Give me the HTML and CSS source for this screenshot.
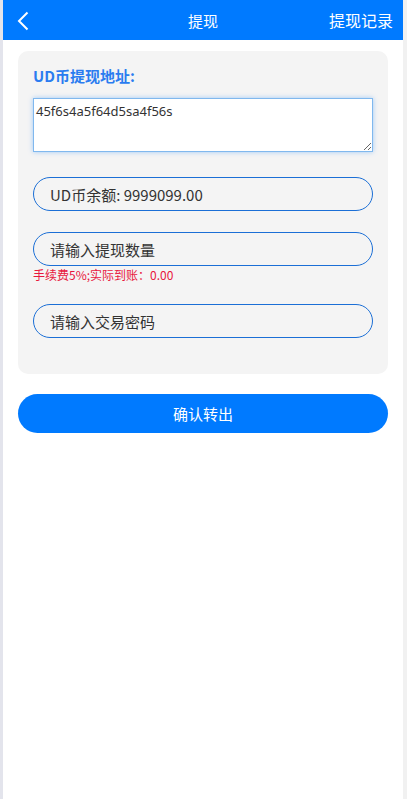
FILE: index.html
```html
<!DOCTYPE html>
<html lang="zh-CN">
<head>
  <meta charset="UTF-8">
  <meta name="viewport" content="width=device-width, initial-scale=1.0">
  <title>提现</title>
  <link rel="stylesheet" href="styles.css">
</head>
<body>
  <div class="page">
    <div class="header">
      <a class="back" href="#">
        <svg width="14" height="20" viewBox="0 0 14 20"><path d="M11.5 1.5 L3 10 L11.5 18.5" fill="none" stroke="#fff" stroke-width="2"/></svg>
      </a>
      <div class="title">提现</div>
      <a class="record" href="#">提现记录</a>
    </div>

    <div class="content">
      <div class="card">
        <div class="label">UD币提现地址:</div>
        <textarea class="address">45f6s4a5f64d5sa4f56s</textarea>

        <div class="field">UD币余额: 9999099.00</div>

        <input class="field" type="text" placeholder="请输入提现数量">
        <p class="fee">手续费5%;实际到账：0.00</p>

        <input class="field last" type="password" placeholder="请输入交易密码">
      </div>

      <button class="submit">确认转出</button>
    </div>
  </div>
</body>
</html>
```

FILE: styles.css
```css
* {
  margin: 0;
  padding: 0;
  box-sizing: border-box;
}
body {
  font-family: "Noto Sans CJK SC", "Noto Sans", sans-serif;
  background-color: #f1f1f1;
  border-left: 3px solid #e3e4ec;
  padding-right: 4px;
  height: 100vh;
}
.page {
  background-color: white;
  height: 100%;
}
.header {
  height: 40px;
  background-color: #007aff;
  color: white;
  display: flex;
  align-items: center;
  position: relative;
}
.back {
  display: flex;
  margin-left: 13px;
  margin-top: 2px;
}
.title {
  position: absolute;
  left: 0;
  right: 0;
  text-align: center;
  font-size: 15px;
  pointer-events: none;
}
.record {
  margin-left: auto;
  margin-right: 10px;
  color: white;
  text-decoration: none;
  font-size: 16px;
}
.content {
  padding: 11px 15px 0;
}
.card {
  background-color: #f4f4f4;
  border-radius: 10px;
  padding: 14px 15px 36px;
  display: flex;
  flex-direction: column;
}
.label {
  color: #2a7cf0;
  font-size: 15px;
  font-weight: bold;
  line-height: 22px;
}
.address {
  margin-top: 11px;
  height: 54px;
  border: 1px solid #80b8ee;
  box-shadow: 0 0 5px rgba(0, 122, 255, 0.35);
  background-color: white;
  font-family: "Noto Sans", sans-serif;
  font-size: 13px;
  color: #333;
  padding: 3px 2px;
  outline: none;
}
.field {
  height: 34px;
  border: 1px solid #1b6fd6;
  border-radius: 17px;
  background-color: #f4f4f4;
  padding: 0 16px;
  font-family: "Noto Sans CJK SC", "Noto Sans", sans-serif;
  font-size: 15px;
  color: #333;
  display: flex;
  align-items: center;
  margin-top: 21px;
  width: 100%;
  outline: none;
}
.address + .field {
  margin-top: 25px;
}
.field::placeholder {
  color: #333;
}
.fee {
  color: #e8173d;
  font-size: 12px;
  line-height: 16px;
  margin-top: 1px;
}
.fee + .field {
  margin-top: 21px;
}
.submit {
  margin-top: 20px;
  width: 100%;
  height: 39px;
  border: none;
  border-radius: 20px;
  background-color: #007aff;
  color: white;
  font-family: "Noto Sans CJK SC", sans-serif;
  font-size: 15px;
  cursor: pointer;
}
```
